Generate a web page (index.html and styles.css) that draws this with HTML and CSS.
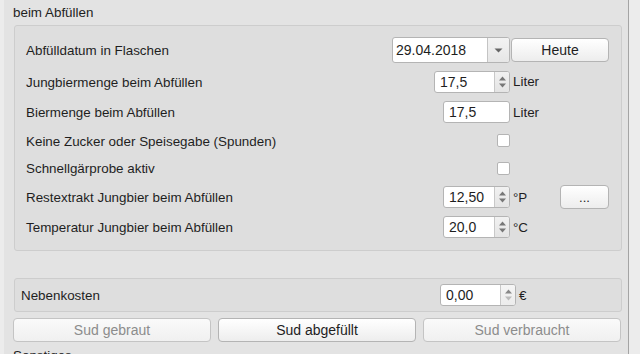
FILE: index.html
```html
<!DOCTYPE html>
<html>
<head>
<meta charset="utf-8">
<link rel="stylesheet" href="styles.css">
</head>
<body>
<div class="window">
  <div class="strip-left"></div>
  <div class="main">
    <div class="group-title">beim Abfüllen</div>
    <div class="group">
      <div class="grid">
        <div class="label">Abfülldatum in Flaschen</div>
        <div class="ctl">
          <div class="combo">
            <span class="field-text">29.04.2018</span>
            <span class="combo-btn"><svg width="9" height="5" viewBox="0 0 9 5"><path d="M0.5 0.5h8L4.5 4.5z" fill="#666"/></svg></span>
          </div>
        </div>
        <div class="span2"><button class="btn btn-heute">Heute</button></div>

        <div class="label">Jungbiermenge beim Abfüllen</div>
        <div class="ctl">
          <div class="spin w76">
            <span class="field-text">17,5</span>
            <span class="spin-btn"><svg width="9" height="16" viewBox="0 0 9 16"><path d="M1 6.5L4.5 2.5L8 6.5z" fill="#777"/><path d="M1 9.5L4.5 13.5L8 9.5z" fill="#777"/></svg></span>
          </div>
        </div>
        <div class="unit">Liter</div>
        <div></div>

        <div class="label">Biermenge beim Abfüllen</div>
        <div class="ctl">
          <div class="edit w67"><span class="field-text">17,5</span></div>
        </div>
        <div class="unit">Liter</div>
        <div></div>

        <div class="label">Keine Zucker oder Speisegabe (Spunden)</div>
        <div class="ctl"><span class="check"></span></div>
        <div></div>
        <div></div>

        <div class="label">Schnellgärprobe aktiv</div>
        <div class="ctl"><span class="check"></span></div>
        <div></div>
        <div></div>

        <div class="label">Restextrakt Jungbier beim Abfüllen</div>
        <div class="ctl">
          <div class="spin w67">
            <span class="field-text">12,50</span>
            <span class="spin-btn"><svg width="9" height="16" viewBox="0 0 9 16"><path d="M1 6.5L4.5 2.5L8 6.5z" fill="#777"/><path d="M1 9.5L4.5 13.5L8 9.5z" fill="#777"/></svg></span>
          </div>
        </div>
        <div class="unit">°P</div>
        <div class="extra"><button class="btn btn-dots">...</button></div>

        <div class="label">Temperatur Jungbier beim Abfüllen</div>
        <div class="ctl">
          <div class="spin w67">
            <span class="field-text">20,0</span>
            <span class="spin-btn"><svg width="9" height="16" viewBox="0 0 9 16"><path d="M1 6.5L4.5 2.5L8 6.5z" fill="#777"/><path d="M1 9.5L4.5 13.5L8 9.5z" fill="#777"/></svg></span>
          </div>
        </div>
        <div class="unit">°C</div>
        <div></div>
      </div>
    </div>

    <div class="costs">
      <div class="label costs-label">Nebenkosten</div>
      <div class="spin w76 disabled-spin">
        <span class="field-text">0,00</span>
        <span class="spin-btn"><svg width="9" height="16" viewBox="0 0 9 16"><path d="M1 6.5L4.5 2.5L8 6.5z" fill="#888"/><path d="M1 9.5L4.5 13.5L8 9.5z" fill="#bbb"/></svg></span>
      </div>
      <div class="euro">€</div>
    </div>

    <div class="buttons">
      <button class="btn big disabled">Sud gebraut</button>
      <button class="btn big">Sud abgefüllt</button>
      <button class="btn big disabled">Sud verbraucht</button>
    </div>

    <div class="next-title">Sonstiges</div>
  </div>
  <div class="strip-right"></div>
</div>
</body>
</html>
```

FILE: styles.css
```css
html, body {
  margin: 0;
  padding: 0;
  width: 640px;
  height: 354px;
  overflow: hidden;
  background: #e3e3e3;
  font-family: "Liberation Sans", Arial, sans-serif;
  font-size: 13.4px;
  color: #1e1e1e;
}

.window {
  display: flex;
  height: 354px;
}

.strip-left {
  width: 4px;
  background: #ececec;
  flex: none;
}

.strip-right {
  width: 11px;
  flex: none;
  background: #ececec;
  border-left: 1px solid #a4a4a4;
}

.main {
  flex: 1;
  padding: 0 6px 0 10px;
  background: #e3e3e3;
}

.group-title {
  margin-left: -1px;
  height: 25px;
  line-height: 15px;
  padding-top: 5px;
  box-sizing: border-box;
}

.group {
  border: 1px solid #cdcdcd;
  border-radius: 3px;
  background: #dedede;
  padding: 8px 12px 8px 11px;
  height: 226px;
  box-sizing: border-box;
}

.grid {
  display: grid;
  grid-template-columns: 1fr auto 50px 49px;
  grid-template-rows: 32px 31px 30px 27px 28px 30px 30px;
  align-items: center;
}

.label {
  white-space: nowrap;
  padding-top: 1px;
}

.ctl {
  justify-self: end;
  display: flex;
  align-items: center;
}

.unit {
  padding-left: 3px;
}

.span2 {
  grid-column: span 2;
  display: flex;
}

.extra {
  display: flex;
}

.field-text {
  flex: 1;
  padding-left: 5px;
  line-height: 20px;
}

.combo {
  width: 118px;
  height: 26px;
  box-sizing: border-box;
  border: 1px solid #b4b4b4;
  border-radius: 3px;
  background: #fff;
  display: flex;
  font-size: 14px;
  align-items: stretch;
}

.combo .field-text {
  line-height: 24px;
  padding-left: 3px;
}

.combo-btn {
  width: 21px;
  border-left: 1px solid #c4c4c4;
  background: linear-gradient(#f3f3f3, #e6e6e6);
  border-radius: 0 2px 2px 0;
  display: flex;
  align-items: center;
  justify-content: center;
}

.spin, .edit {
  height: 22px;
  box-sizing: border-box;
  border: 1px solid #b4b4b4;
  border-radius: 3px;
  background: #fff;
  display: flex;
  font-size: 14px;
}

.w76 { width: 76px; }
.w67 { width: 67px; }

.spin-btn {
  width: 14px;
  border-left: 1px solid #c8c8c8;
  background: linear-gradient(#f1f1f1, #e4e4e4);
  border-radius: 0 2px 2px 0;
  display: flex;
  align-items: center;
  justify-content: center;
}

.check {
  width: 13px;
  height: 13px;
  box-sizing: border-box;
  border: 1px solid #b4b4b4;
  border-radius: 2px;
  background: #fff;
  display: block;
}

.btn {
  font-family: "Liberation Sans", Arial, sans-serif;
  font-size: 13px;
  color: #1e1e1e;
  border: 1px solid #b4b4b4;
  border-radius: 4px;
  background: linear-gradient(#ffffff, #ededed);
  padding: 0;
  height: 24px;
  box-sizing: border-box;
}

.btn-heute {
  width: 99px;
  margin-left: 1px;
  font-size: 14px;
}

.btn-dots {
  width: 50px;
}

.costs {
  margin-top: 27px;
  height: 34px;
  box-sizing: border-box;
  border: 1px solid #cdcdcd;
  border-radius: 3px;
  background: #dedede;
  display: flex;
  align-items: center;
  padding-left: 6px;
}

.costs-label {
  flex: 1;
}

.disabled-spin .spin-btn {
  background: linear-gradient(#f5f5f5, #ececec);
}

.euro {
  width: 105px;
  padding-left: 3px;
  box-sizing: border-box;
}

.buttons {
  margin-top: 6px;
  margin-left: -1px;
  display: grid;
  grid-template-columns: 1fr 1fr 1fr;
  column-gap: 7px;
  width: 608px;
}

.btn.big {
  height: 24px;
  font-size: 14px;
}

.btn.disabled {
  color: #8c8c8c;
  background: linear-gradient(#fafafa, #f0f0f0);
  border-color: #c4c4c4;
}

.next-title {
  margin-top: 6px;
  margin-left: -1px;
  line-height: 15px;
}
```
